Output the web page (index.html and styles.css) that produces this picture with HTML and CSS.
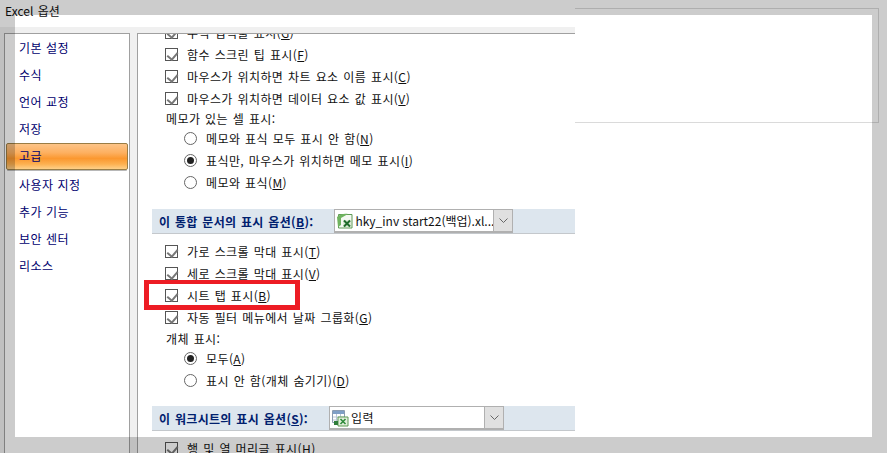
FILE: index.html
```html
<!DOCTYPE html>
<html lang="ko">
<head>
    <meta charset="UTF-8">
    <meta name="viewport" content="width=device-width, initial-scale=1.0">
    <title>Excel 옵션</title>
    <link rel="stylesheet" href="styles.css">
</head>
<body>
    <div class="dialog">
        <div class="dialogTitle">Excel 옵션</div>
        <div class="dialogBody">
            <ul class="nav">
                <li>기본 설정</li>
                <li>수식</li>
                <li>언어 교정</li>
                <li>저장</li>
                <li class="navOn">고급</li>
                <li>사용자 지정</li>
                <li>추가 기능</li>
                <li>보안 센터</li>
                <li>리소스</li>
            </ul>
            <div class="content">
                <div class="row rowCut"><span class="check"></span>수식 입력줄 표시(<u>G</u>)</div>
                <div class="row"><span class="check"></span>함수 스크린 팁 표시(<u>F</u>)</div>
                <div class="row"><span class="check"></span>마우스가 위치하면 차트 요소 이름 표시(<u>C</u>)</div>
                <div class="row"><span class="check"></span>마우스가 위치하면 데이터 요소 값 표시(<u>V</u>)</div>
                <div class="row caption">메모가 있는 셀 표시:</div>
                <div class="row sub"><span class="radio"></span>메모와 표식 모두 표시 안 함(<u>N</u>)</div>
                <div class="row sub"><span class="radio radioOn"></span>표식만, 마우스가 위치하면 메모 표시(<u>I</u>)</div>
                <div class="row sub"><span class="radio"></span>메모와 표식(<u>M</u>)</div>

                <div class="section">
                    <span class="sectionLabel">이 통합 문서의 표시 옵션(<u>B</u>):</span>
                    <div class="combo comboBook">
                        <svg class="comboIcon" width="18" height="18" viewBox="0 0 18 18">
                            <path d="M2.500 2.500H16V16H2.500z" fill="#f4f8f2" stroke="#5f9a55"/>
                            <path d="M1 5C4 2 8 1.500 12 2L5 6V13L2 15z" fill="#6fb35f"/>
                            <path d="M7 8H15V15H7z" fill="#dcebd6"/>
                            <path d="M8 8.500L14 14.500M14 8.500L8 14.500" stroke="#1f6b2a" stroke-width="2"/>
                        </svg>
                        <span class="comboText">hky_inv start22(백업).xl...</span>
                        <span class="comboBtn"><svg width="9" height="5" viewBox="0 0 9 5"><path d="M.5 .5L4.500 4.500L8.500 .5" fill="none" stroke="#666"/></svg></span>
                    </div>
                </div>

                <div class="row first"><span class="check"></span>가로 스크롤 막대 표시(<u>T</u>)</div>
                <div class="row"><span class="check"></span>세로 스크롤 막대 표시(<u>V</u>)</div>
                <div class="row"><span class="check"></span>시트 탭 표시(<u>B</u>)</div>
                <div class="row"><span class="check"></span>자동 필터 메뉴에서 날짜 그룹화(<u>G</u>)</div>
                <div class="row caption captionLow">개체 표시:</div>
                <div class="row sub"><span class="radio radioOn"></span>모두(<u>A</u>)</div>
                <div class="row sub"><span class="radio"></span>표시 안 함(개체 숨기기)(<u>D</u>)</div>

                <div class="section sectionNext">
                    <span class="sectionLabel">이 워크시트의 표시 옵션(<u>S</u>):</span>
                    <div class="combo comboSheet">
                        <svg class="comboIcon" width="18" height="18" viewBox="0 0 18 18">
                            <path d="M1.500 1.500H13.500V13.500H1.500z" fill="#fff" stroke="#8a9bb0"/>
                            <path d="M2 2H13V5H2z" fill="#7f9fc6"/>
                            <path d="M5.500 5V13M9.500 5V13M2 8H13M2 11H13" stroke="#b9c6d6"/>
                            <path d="M7 8H17V17H7z" fill="#e2efdc" stroke="#5f9a55"/>
                            <path d="M3 12H7V16H3z" fill="#2f7d3a"/>
                            <path d="M9.500 10L14.500 15M14.500 10L9.500 15" stroke="#2f8a3a" stroke-width="1.600"/>
                        </svg>
                        <span class="comboText">입력</span>
                        <span class="comboBtn"><svg width="9" height="5" viewBox="0 0 9 5"><path d="M.5 .5L4.500 4.500L8.500 .5" fill="none" stroke="#666"/></svg></span>
                    </div>
                </div>

                <div class="row first"><span class="check"></span>행 및 열 머리글 표시(<u>H</u>)</div>
            </div>
        </div>
    </div>

    <div class="ghostBox"></div>
    <div class="redBox"></div>
    <div class="sheet"></div>
</body>
</html>
```
FILE: styles.css
```css
* {
    box-sizing: border-box;
}
html,
body {
    margin: 0;
    height: 100%;
}
body {
    position: relative;
    width: 887px;
    height: 453px;
    overflow: hidden;
    background-color: #fff;
    color: #111;
    font-family: "Noto Sans CJK KR", "Liberation Sans", sans-serif;
    font-size: 12px;
}

.dialog {
    width: 575px;
}
.dialogTitle {
    height: 27px;
    padding: 2px 0 0 5px;
    line-height: 18px;
    word-spacing: 1px;
}
.dialogBody {
    display: flex;
    gap: 7px;
    height: 426px;
    padding: 6px 0 0 4px;
    background-color: #f0f0f0;
}

/* 왼쪽 메뉴 */
.nav {
    width: 126px;
    margin: 0;
    padding: 0 1px;
    border: 1px solid #a0a0a0;
    border-bottom: 0;
    background-color: #fff;
    list-style: none;
    color: #00006e;
}
.nav li {
    height: 27px;
    padding-left: 13px;
    line-height: 27px;
    letter-spacing: .5px;
}
.nav .navOn {
    margin-top: 1px;
    margin-bottom: 1px;
    border: 1px solid #9a7d45;
    border-radius: 2px;
    padding-left: 12px;
    line-height: 24px;
    background: linear-gradient(#fdc488 0%, #fdb060 35%, #fb9830 58%, #fdb050 80%, #ffd088 100%);
    box-shadow: 0 2px 0 -1px #b8b8b8;
}

/* 오른쪽 내용 */
.content {
    flex: 1;
    overflow: hidden;
    border: 1px solid #a0a0a0;
    border-right: 0;
    border-bottom: 0;
    background-color: #fff;
    padding-left: 14px;
}
.row {
    display: flex;
    align-items: center;
    height: 22px;
    padding-left: 13px;
    letter-spacing: .4px;
    word-spacing: 1px;
    white-space: nowrap;
}
.rowCut {
    margin-top: -13px;
}
.caption {
    height: 18px;
    padding-left: 14px;
}
.captionLow {
    margin-top: 1px;
}
.sub {
    padding-left: 32px;
}
.first {
    height: 21px;
    margin-top: 7px;
}
.row u {
    text-decoration: underline;
}

.check {
    position: relative;
    flex: none;
    width: 13px;
    height: 13px;
    margin-right: 9px;
    border: 1px solid #555;
    background-color: #fff;
}
.check::after {
    content: "";
    position: absolute;
    left: 3px;
    top: 1px;
    width: 5px;
    height: 8px;
    border-right: 2px solid #777;
    border-bottom: 2px solid #777;
    transform: rotate(40deg);
}
.radio {
    position: relative;
    flex: none;
    width: 13px;
    height: 13px;
    margin-right: 9px;
    border: 1px solid #666;
    border-radius: 50%;
    background-color: #fff;
}
.radioOn::after {
    content: "";
    position: absolute;
    left: 2px;
    top: 2px;
    width: 7px;
    height: 7px;
    border-radius: 50%;
    background-color: #222;
}

.section {
    display: flex;
    align-items: center;
    gap: 21px;
    height: 25px;
    margin-top: 16px;
    padding-left: 7px;
    border-bottom: 1px solid #c4c8cc;
    background-color: #dde6ee;
}
.sectionNext {
    margin-top: 15px;
}
.sectionLabel {
    font-weight: bold;
    color: #00206e;
    letter-spacing: .3px;
    word-spacing: 1px;
    white-space: nowrap;
}
.combo {
    display: flex;
    align-items: center;
    height: 24px;
    border: 1px solid #b0b0b0;
    border-bottom-width: 2px;
    background-color: #fff;
}
.comboBook {
    width: 179px;
}
.comboSheet {
    width: 175px;
}
.comboIcon {
    flex: none;
    margin-left: 1px;
}
.comboText {
    flex: 1;
    padding-left: 1px;
    white-space: nowrap;
    overflow: hidden;
}
.comboSheet .comboText {
    padding-left: 2px;
    letter-spacing: .5px;
}
.comboBtn {
    display: flex;
    align-items: center;
    justify-content: center;
    flex: none;
    width: 19px;
    height: 100%;
    border-left: 1px solid #b0b0b0;
    background-color: #e0e0e0;
}

/* 스크린샷 위에 얹힌 것들 */
.ghostBox {
    position: absolute;
    left: 575px;
    top: 8px;
    width: 304px;
    height: 115px;
    border: 1px solid #dadada;
    border-left: 0;
}
.redBox {
    position: absolute;
    left: 144px;
    top: 280px;
    width: 156px;
    height: 30px;
    border: 5px solid #ed1c24;
    border-top-width: 4px;
}
.sheet {
    position: absolute;
    left: 15px;
    top: 15px;
    width: 857px;
    height: 422px;
    box-shadow: 0 0 0 900px rgba(0, 0, 0, .2);
}
```
